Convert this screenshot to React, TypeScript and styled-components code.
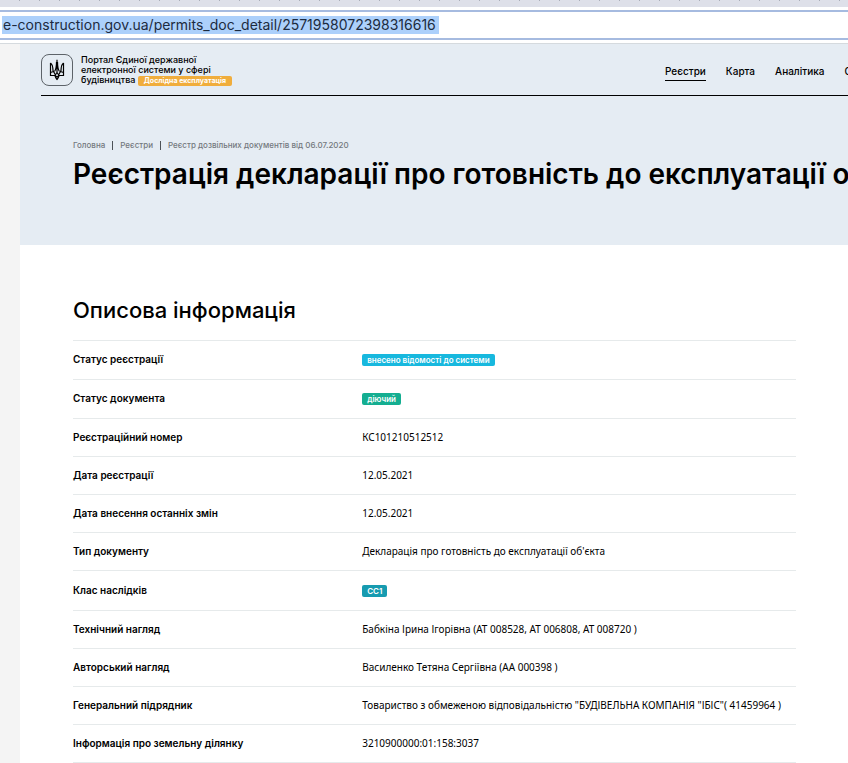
import React from "react";
import styled, { createGlobalStyle } from "styled-components";

const GlobalStyle = createGlobalStyle`
  * { box-sizing: border-box; }
  body {
    margin: 0;
    background: #fff;
    color: #000;
    font-family: Inter, "Noto Sans", sans-serif;
    overflow: hidden;
  }
`;

const TabStrip = styled.div`
  height: 7px;
  background: repeating-linear-gradient(90deg, transparent 0 19px, #a9adb8 19px 20px) 0 0 / 100% 1px no-repeat #dee0e9;
`;

const AddressBar = styled.form`
  display: flex;
  align-items: center;
  height: 30px;
  margin: 3px 0;
  padding-left: 2px;
  border: solid #a6bbe0;
  border-width: 2px 0;
  background: #fff;
`;

const AddressInput = styled.input`
  field-sizing: content;
  height: 18px;
  padding: 0 3px 0 1px;
  border: 0;
  outline: 0;
  background: #acd0fb;
  color: #1c2b40;
  font: 400 14px/18px Inter, sans-serif;
`;

const Viewport = styled.div`
  min-height: 720px;
  padding-left: 20px;
  border-top: 1px solid #d5dade;
  background: #f4f4f4;
  overflow: hidden;
`;

const Hero = styled.div`
  min-height: 201px;
  padding-bottom: 52px;
  background: #e5ecf3;
`;

const Header = styled.header`
  display: flex;
  justify-content: space-between;
  margin-left: 21px;
  padding: 10px 0 9px;
  border-bottom: 1px solid #000;
`;

const Brand = styled.a`
  display: flex;
  gap: 8px;
  color: inherit;
  text-decoration: none;
`;

const Emblem = styled.span`
  display: flex;
  align-items: center;
  justify-content: center;
  width: 32px;
  height: 32px;
  border: 1px solid #5d6369;
  border-radius: 8px;
`;

const BrandName = styled.span`
  width: 156px;
  padding-top: 1px;
  font-size: 9px;
  font-weight: 500;
  line-height: 10px;
`;

const Stage = styled.span`
  display: inline-block;
  padding: 0 6px;
  border-radius: 2px;
  background: #f0ad3c;
  color: #fff;
  font-size: 7px;
  font-weight: 700;
`;

const Nav = styled.nav`
  display: flex;
  flex: 0 0 183px;
  align-items: flex-start;
  gap: 20px;
  min-width: 0;
  padding-top: 10px;
`;

const NavLink = styled.a<{ $active?: boolean }>`
  flex: none;
  padding-bottom: 2px;
  border-bottom: 1px solid ${(p) => (p.$active ? "#000" : "transparent")};
  color: inherit;
  font-size: 10px;
  font-weight: 500;
  line-height: 14px;
  text-decoration: none;
`;

const Crumbs = styled.nav`
  display: flex;
  align-items: center;
  gap: 7px;
  margin: 43px 0 0 53px;
  line-height: 12px;
`;

const Crumb = styled.a`
  color: #74797e;
  font-size: 8px;
  font-weight: 500;
  text-decoration: none;
`;

const CrumbDivider = styled.span`
  width: 1px;
  height: 9px;
  background: #4d5257;
`;

const Title = styled.h1`
  margin: 5px 0 0 53px;
  font-size: 28px;
  font-weight: 600;
  line-height: 36px;
  white-space: nowrap;
`;

const Content = styled.main`
  min-height: 520px;
  padding: 52px 52px 0 53px;
  background: #fff;
`;

const SectionTitle = styled.h2`
  margin: 0 0 17px;
  font-size: 22px;
  font-weight: 500;
  line-height: 26px;
`;

const Details = styled.table`
  width: 100%;
  border-collapse: separate;
  border-spacing: 0;
  table-layout: fixed;
  font-size: 10px;
  line-height: 14px;
`;

const Row = styled.tr<{ $height: number }>`
  height: ${(p) => p.$height}px;
`;

const Label = styled.th`
  width: 40%;
  padding: 0 0 2px;
  border-top: 1px solid #e6eaeb;
  font-weight: 600;
  text-align: left;
`;

const Value = styled.td<{ $badge?: boolean }>`
  padding: ${(p) => (p.$badge ? "0" : "0 0 2px")};
  border-top: 1px solid #e6eaeb;
  font-family: "Noto Sans", sans-serif;
`;

const Badge = styled.span<{ $color: string }>`
  display: block;
  width: fit-content;
  padding: 0 5px;
  border-radius: 2px;
  background: ${(p) => p.$color};
  color: #fff;
  font: 600 8px/12px Inter, sans-serif;
`;

type Detail = { label: string; value: string; badge?: string; height?: number };

const details: Detail[] = [
  { label: "Статус реєстрації", value: "внесено відомості до системи", badge: "#17b8de", height: 39 },
  { label: "Статус документа", value: "діючий", badge: "#14ae91", height: 39 },
  { label: "Реєстраційний номер", value: "КС101210512512" },
  { label: "Дата реєстрації", value: "12.05.2021" },
  { label: "Дата внесення останніх змін", value: "12.05.2021" },
  { label: "Тип документу", value: "Декларація про готовність до експлуатації об'єкта" },
  { label: "Клас наслідків", value: "СС1", badge: "#179bb0", height: 40 },
  { label: "Технічний нагляд", value: "Бабкіна Ірина Ігорівна (АТ 008528, АТ 006808, АТ 008720 )" },
  { label: "Авторський нагляд", value: "Василенко Тетяна Сергіївна (АА 000398 )" },
  { label: "Генеральний підрядник", value: 'Товариство з обмеженою відповідальністю "БУДІВЕЛЬНА КОМПАНІЯ "ІБІС"( 41459964 )' },
  { label: "Інформація про земельну ділянку", value: "3210900000:01:158:3037" },
];

const Trident = () => (
  <svg width="16" height="22" viewBox="0 0 16 22" fill="none" stroke="#000" strokeWidth="1.2" aria-hidden="true">
    <path d="M1.5 4v12.5h4.5c.4 1.6 1 3 2 4 1-1 1.6-2.4 2-4h4.5V4" />
    <path d="M1.5 4c1.6 1.5 2.2 3 2.3 5l.3 3.5M14.5 4c-1.6 1.5-2.2 3-2.3 5l-.3 3.5M1.5 13.5l3-1 2 3.5M14.5 13.5l-3-1-2 3.5" />
    <path d="M8 .8v13M7.5 3c0 5-.5 7.5-2 9.5M8.5 3c0 5 .5 7.5 2 9.5M8 13.5l-2 3 2 1.5 2-1.5Z" />
  </svg>
);

export default function App() {
  return (
    <>
      <GlobalStyle />
      <TabStrip />
      <AddressBar>
        <AddressInput
          aria-label="Адреса сторінки"
          defaultValue="e-construction.gov.ua/permits_doc_detail/2571958072398316616"
          spellCheck={false}
        />
      </AddressBar>
      <Viewport>
        <Hero>
          <Header>
            <Brand href="#">
              <Emblem><Trident /></Emblem>
              <BrandName>
                Портал Єдиної державної електронної системи у сфері будівництва <Stage>Дослідна експлуатація</Stage>
              </BrandName>
            </Brand>
            <Nav>
              <NavLink href="#" $active>Реєстри</NavLink>
              <NavLink href="#">Карта</NavLink>
              <NavLink href="#">Аналітика</NavLink>
              <NavLink href="#">Open Data</NavLink>
            </Nav>
          </Header>
          <Crumbs>
            <Crumb href="#">Головна</Crumb>
            <CrumbDivider />
            <Crumb href="#">Реєстри</Crumb>
            <CrumbDivider />
            <Crumb href="#">Реєстр дозвільних документів від 06.07.2020</Crumb>
          </Crumbs>
          <Title>Реєстрація декларації про готовність до експлуатації об'єкта</Title>
        </Hero>
        <Content>
          <SectionTitle>Описова інформація</SectionTitle>
          <Details>
            <tbody>
              {details.map((d) => (
                <Row key={d.label} $height={d.height ?? 38}>
                  <Label scope="row">{d.label}</Label>
                  <Value $badge={!!d.badge}>{d.badge ? <Badge $color={d.badge}>{d.value}</Badge> : d.value}</Value>
                </Row>
              ))}
              <Row $height={38}>
                <Label />
                <Value />
              </Row>
            </tbody>
          </Details>
        </Content>
      </Viewport>
    </>
  );
}
